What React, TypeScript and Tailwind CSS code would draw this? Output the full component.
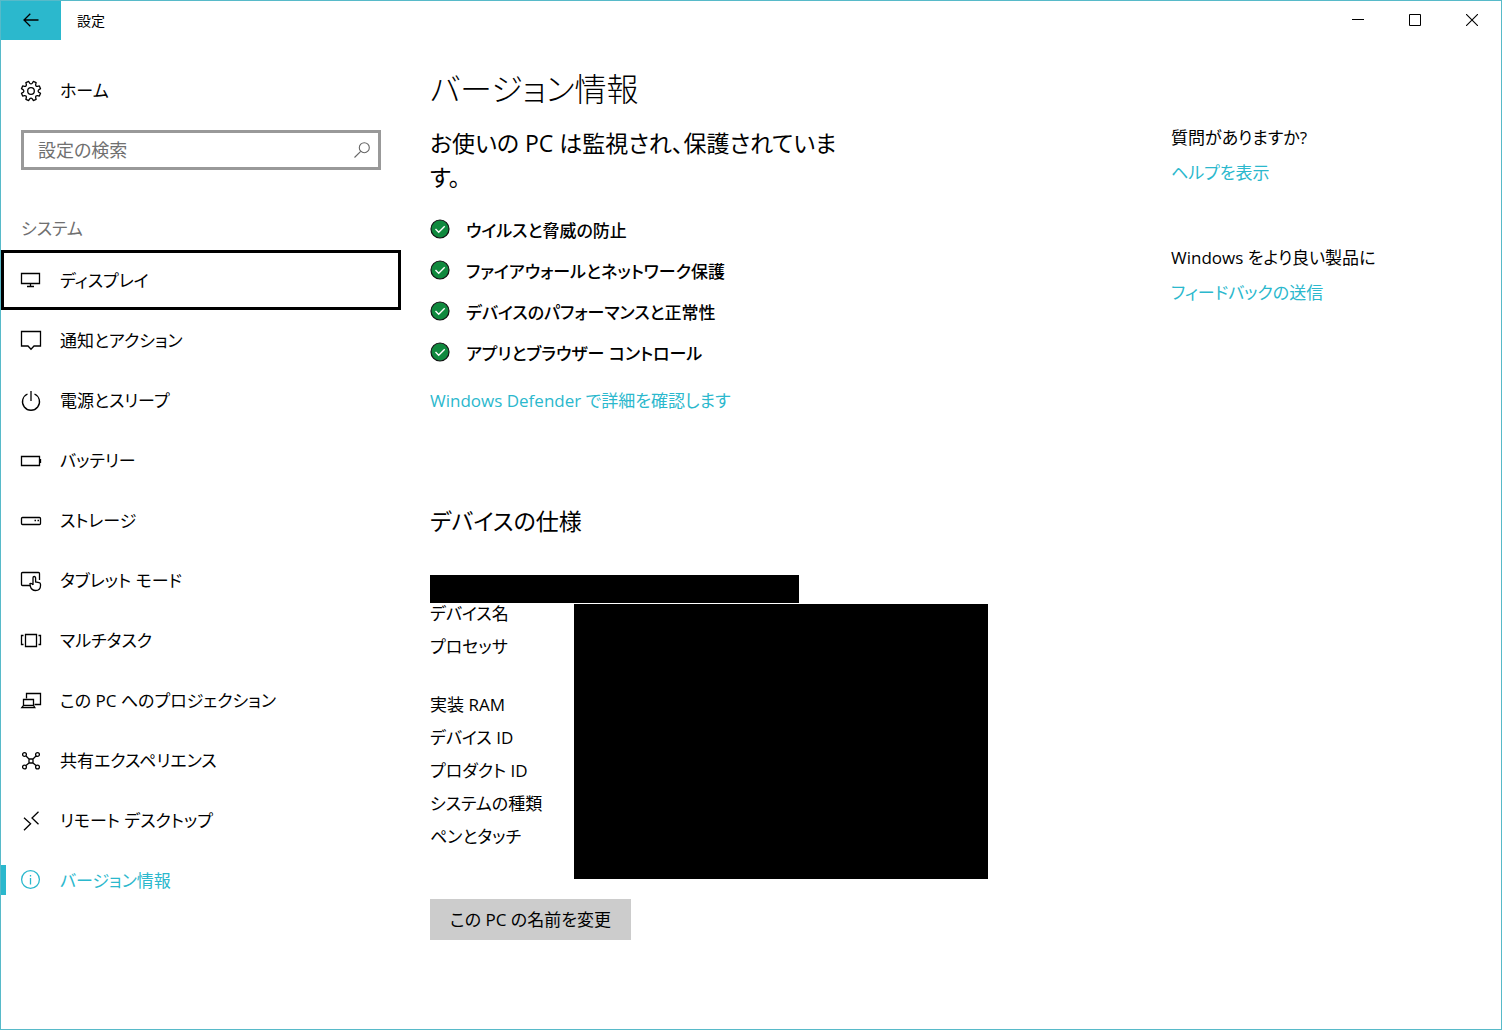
import React from "react";

type IconProps = { children: React.ReactNode };

function Icon({ children }: IconProps) {
  return (
    <svg
      width="20"
      height="20"
      viewBox="0 0 20 20"
      fill="none"
      stroke="currentColor"
      strokeWidth="1.3"
      className="shrink-0 overflow-visible"
      aria-hidden="true"
    >
      {children}
    </svg>
  );
}

// Outline of an eight-toothed gear centred on (10, 10).
const gearPath = (() => {
  const parts: string[] = [];
  const at = (radius: number, degrees: number) => {
    const a = (degrees * Math.PI) / 180;
    return `${(10 + radius * Math.cos(a)).toFixed(2)} ${(10 + radius * Math.sin(a)).toFixed(2)}`;
  };
  for (let i = 0; i < 8; i++) {
    const c = i * 45 + 22.5;
    parts.push(`${i === 0 ? "M" : "L"}${at(9.8, c - 9)}`);
    parts.push(`L${at(9.8, c + 9)}`);
    parts.push(`L${at(8, c + 13)}`);
    parts.push(`Q${at(6.4, c + 22.5)} ${at(8, c + 32)}`);
  }
  return parts.join(" ") + "Z";
})();

const navItems: { label: string; icon: React.ReactNode; focused?: boolean; current?: boolean }[] = [
  {
    label: "ディスプレイ",
    focused: true,
    icon: (
      <>
        <path d="M.5 3.5h18v10H.5z" />
        <path d="M9.500 13.500v3M6 16.500h7" />
      </>
    ),
  },
  { label: "通知とアクション", icon: <path d="M.5 1.500h19v14.500H13l-3 3.300L7 16H.5z" /> },
  {
    label: "電源とスリープ",
    icon: (
      <>
        <path d="M6.500 4A8.500 8.500 0 1 0 13.500 4" />
        <path d="M10 1v10" />
      </>
    ),
  },
  {
    label: "バッテリー",
    icon: (
      <>
        <path d="M.5 6.500h18v9H.5z" />
        <path d="M19.500 9v4" />
      </>
    ),
  },
  {
    label: "ストレージ",
    icon: (
      <>
        <rect x=".5" y="7.500" width="19" height="7" rx="1" />
        <path d="M13.500 10.500H15M16.500 10.500H18" />
      </>
    ),
  },
  {
    label: "タブレット モード",
    icon: (
      <>
        <path d="M9 15.500H1.500a1 1 0 0 1-1-1v-11a1 1 0 0 1 1-1h16a1 1 0 0 1 1 1V10" />
        <path d="M12 15V7.800a1.300 1.300 0 0 1 2.600 0V12l3.500.6q1.400.3 1.400 1.600v1.500q0 4.800-5 4.800-4 0-5.200-4.200L9 13.500q1.500-.8 3 1.500" />
      </>
    ),
  },
  {
    label: "マルチタスク",
    icon: (
      <>
        <path d="M4.500 4.500h11v12h-11z" />
        <path d="M2.500 5.500h-2v9h2M17.500 5.500h2v9h-2" />
      </>
    ),
  },
  {
    label: "この PC へのプロジェクション",
    icon: (
      <>
        <path d="M5.500 8.500v-5h14v11h-6" />
        <path d="M2.500 9.500h10v6h-10zM.8 17.700h13l-1.300-2.200h-10z" />
      </>
    ),
  },
  {
    label: "共有エクスペリエンス",
    icon: (
      <>
        <circle cx="3.500" cy="4.500" r="1.900" />
        <circle cx="16.500" cy="4.500" r="1.900" />
        <circle cx="3.500" cy="17" r="1.900" />
        <circle cx="16.500" cy="17" r="1.900" />
        <path d="M8 9h4v4H8zM5 6l3 3M15 6l-3 3M5 15.600l3-2.600M15 15.600L12 13" />
      </>
    ),
  },
  { label: "リモート デスクトップ", icon: <path d="M17.500 1.700L11 8l6.500 6.300M3 7.700l6.600 6L3 20.300" /> },
  {
    label: "バージョン情報",
    current: true,
    icon: (
      <>
        <circle cx="9.500" cy="9.500" r="8.900" />
        <path d="M9.500 8v6.500M9.500 5v1.500" />
      </>
    ),
  },
];

const protections = [
  "ウイルスと脅威の防止",
  "ファイアウォールとネットワーク保護",
  "デバイスのパフォーマンスと正常性",
  "アプリとブラウザー コントロール",
];

const specs = [
  { label: "デバイス名", height: "h-[33px]" },
  { label: "プロセッサ", height: "h-[58px]" },
  { label: "実装 RAM", height: "h-[33px]" },
  { label: "デバイス ID", height: "h-[33px]" },
  { label: "プロダクト ID", height: "h-[33px]" },
  { label: "システムの種類", height: "h-[33px]" },
  { label: "ペンとタッチ", height: "h-[52px]" },
];

function TitleBar() {
  return (
    <header className="flex h-[39px] items-stretch">
      <button type="button" aria-label="戻る" className="flex w-[60px] items-center justify-center bg-[#2bb8cd] pb-0.5">
        <svg width="16" height="14" viewBox="0 0 16 14" fill="none" stroke="black" strokeWidth="1.300" aria-hidden="true">
          <path d="M15.500 7H1M7.300.7L1 7l6.300 6.300" />
        </svg>
      </button>
      <h1 className="flex-1 self-center pl-4 text-sm leading-5">設定</h1>
      <button type="button" aria-label="最小化" className="flex w-[57px] items-center justify-center pb-0.5">
        <svg width="12" height="12" fill="none" stroke="black" aria-hidden="true">
          <path d="M0 5.500h12" />
        </svg>
      </button>
      <button type="button" aria-label="最大化" className="flex w-[57px] items-center justify-center pb-0.5">
        <svg width="12" height="12" fill="none" stroke="black" aria-hidden="true">
          <path d="M.5.5h11v11H.5z" />
        </svg>
      </button>
      <button type="button" aria-label="閉じる" className="flex w-[58px] items-center justify-center pb-0.5">
        <svg width="12" height="12" fill="none" stroke="black" strokeWidth="1.100" aria-hidden="true">
          <path d="M0 0l12 12M12 0L0 12" />
        </svg>
      </button>
    </header>
  );
}

function Sidebar() {
  return (
    <nav className="w-[400px] shrink-0 pt-[21px]">
      <a href="#home" className="flex h-[60px] items-center gap-[19px] pl-5">
        <Icon>
          <path d={gearPath} strokeLinejoin="round" />
          <circle cx="10" cy="10" r="3.300" />
        </Icon>
        ホーム
      </a>
      <div className="mx-5 mt-[9px] flex h-10 items-center border-3 border-[#999] pr-2 pl-[14px]">
        <input
          type="search"
          aria-label="設定の検索"
          placeholder="設定の検索"
          className="min-w-0 flex-1 bg-transparent text-lg outline-none placeholder:text-[#707070]"
        />
        <svg width="16" height="16" viewBox="0 0 16 16" fill="none" stroke="#666" strokeWidth="1.100" aria-hidden="true">
          <circle cx="10.300" cy="5.700" r="5" />
          <path d="M6.700 9.300L.5 15.500" />
        </svg>
      </div>
      <h2 className="mt-[47px] mb-[9px] pl-5 leading-6 text-[#707070]">システム</h2>
      <ul>
        {navItems.map((item) => (
          <li key={item.label}>
            <a
              href="#"
              aria-current={item.current ? "page" : undefined}
              className={
                item.focused
                  ? "flex h-[60px] items-center gap-[19px] border-3 border-black pl-[17px]"
                  : item.current
                    ? "relative flex h-[60px] items-center gap-[19px] pl-5 text-[#2bb8cd] before:absolute before:left-0 before:h-[30px] before:w-[5px] before:bg-[#2bb8cd]"
                    : "flex h-[60px] items-center gap-[19px] pl-5"
              }
            >
              <Icon>{item.icon}</Icon>
              <span className="pt-px">{item.label}</span>
            </a>
          </li>
        ))}
      </ul>
    </nav>
  );
}

function About() {
  return (
    <main className="min-w-0 flex-1 pt-[25px] pl-[29px]">
      <h2 className="text-[32px] leading-12 font-light">バージョン情報</h2>
      <p className="mt-[13px] max-w-[420px] text-[23px] leading-[34px]">お使いの PC は監視され、保護されています。</p>
      <ul className="mt-4">
        {protections.map((label) => (
          <li key={label} className="flex h-[41px] items-center gap-4 font-medium">
            <svg width="20" height="20" viewBox="0 0 20 20" fill="none" aria-hidden="true" className="-mt-1 shrink-0">
              <circle cx="10" cy="10" r="9" fill="#10893e" stroke="#111" strokeWidth="1.200" />
              <path d="M5.500 10l3.200 3.200 6-6" stroke="white" strokeWidth="1.400" />
            </svg>
            {label}
          </li>
        ))}
      </ul>
      <a href="#defender" className="mt-[15px] block w-fit leading-6 text-[#2bb8cd]">
        Windows Defender で詳細を確認します
      </a>
      <h3 className="mt-23 text-[23px] leading-8">デバイスの仕様</h3>
      <div className="mt-[38px] h-[28px] w-[369px] bg-black" />
      <table className="mt-px">
        <tbody>
          {specs.map((spec, index) => (
            <tr key={spec.label} className={spec.height}>
              <th scope="row" className="w-[144px] p-0 text-left align-top leading-5 font-normal">
                {spec.label}
              </th>
              {index === 0 && <td rowSpan={specs.length} className="w-[414px] bg-black p-0" />}
            </tr>
          ))}
        </tbody>
      </table>
      <button type="button" className="mt-5 h-[41px] bg-[#ccc] px-5">
        この PC の名前を変更
      </button>
    </main>
  );
}

function HelpPane() {
  return (
    <aside className="w-[330px] shrink-0 pt-[86px] leading-6">
      <h3>質問がありますか?</h3>
      <a href="#help" className="mt-[11px] block w-fit text-[#2bb8cd]">
        ヘルプを表示
      </a>
      <h3 className="mt-[61px]">Windows をより良い製品に</h3>
      <a href="#feedback" className="mt-[11px] block w-fit text-[#2bb8cd]">
        フィードバックの送信
      </a>
    </aside>
  );
}

export default function App() {
  return (
    <div
      lang="ja"
      className="flex min-h-screen flex-col border border-[#57bac9] bg-white font-['Open_Sans','Noto_Sans_CJK_JP',sans-serif] text-[17px] leading-6 text-black [font-feature-settings:'palt']"
    >
      <TitleBar />
      <div className="flex flex-1">
        <Sidebar />
        <About />
        <HelpPane />
      </div>
    </div>
  );
}
